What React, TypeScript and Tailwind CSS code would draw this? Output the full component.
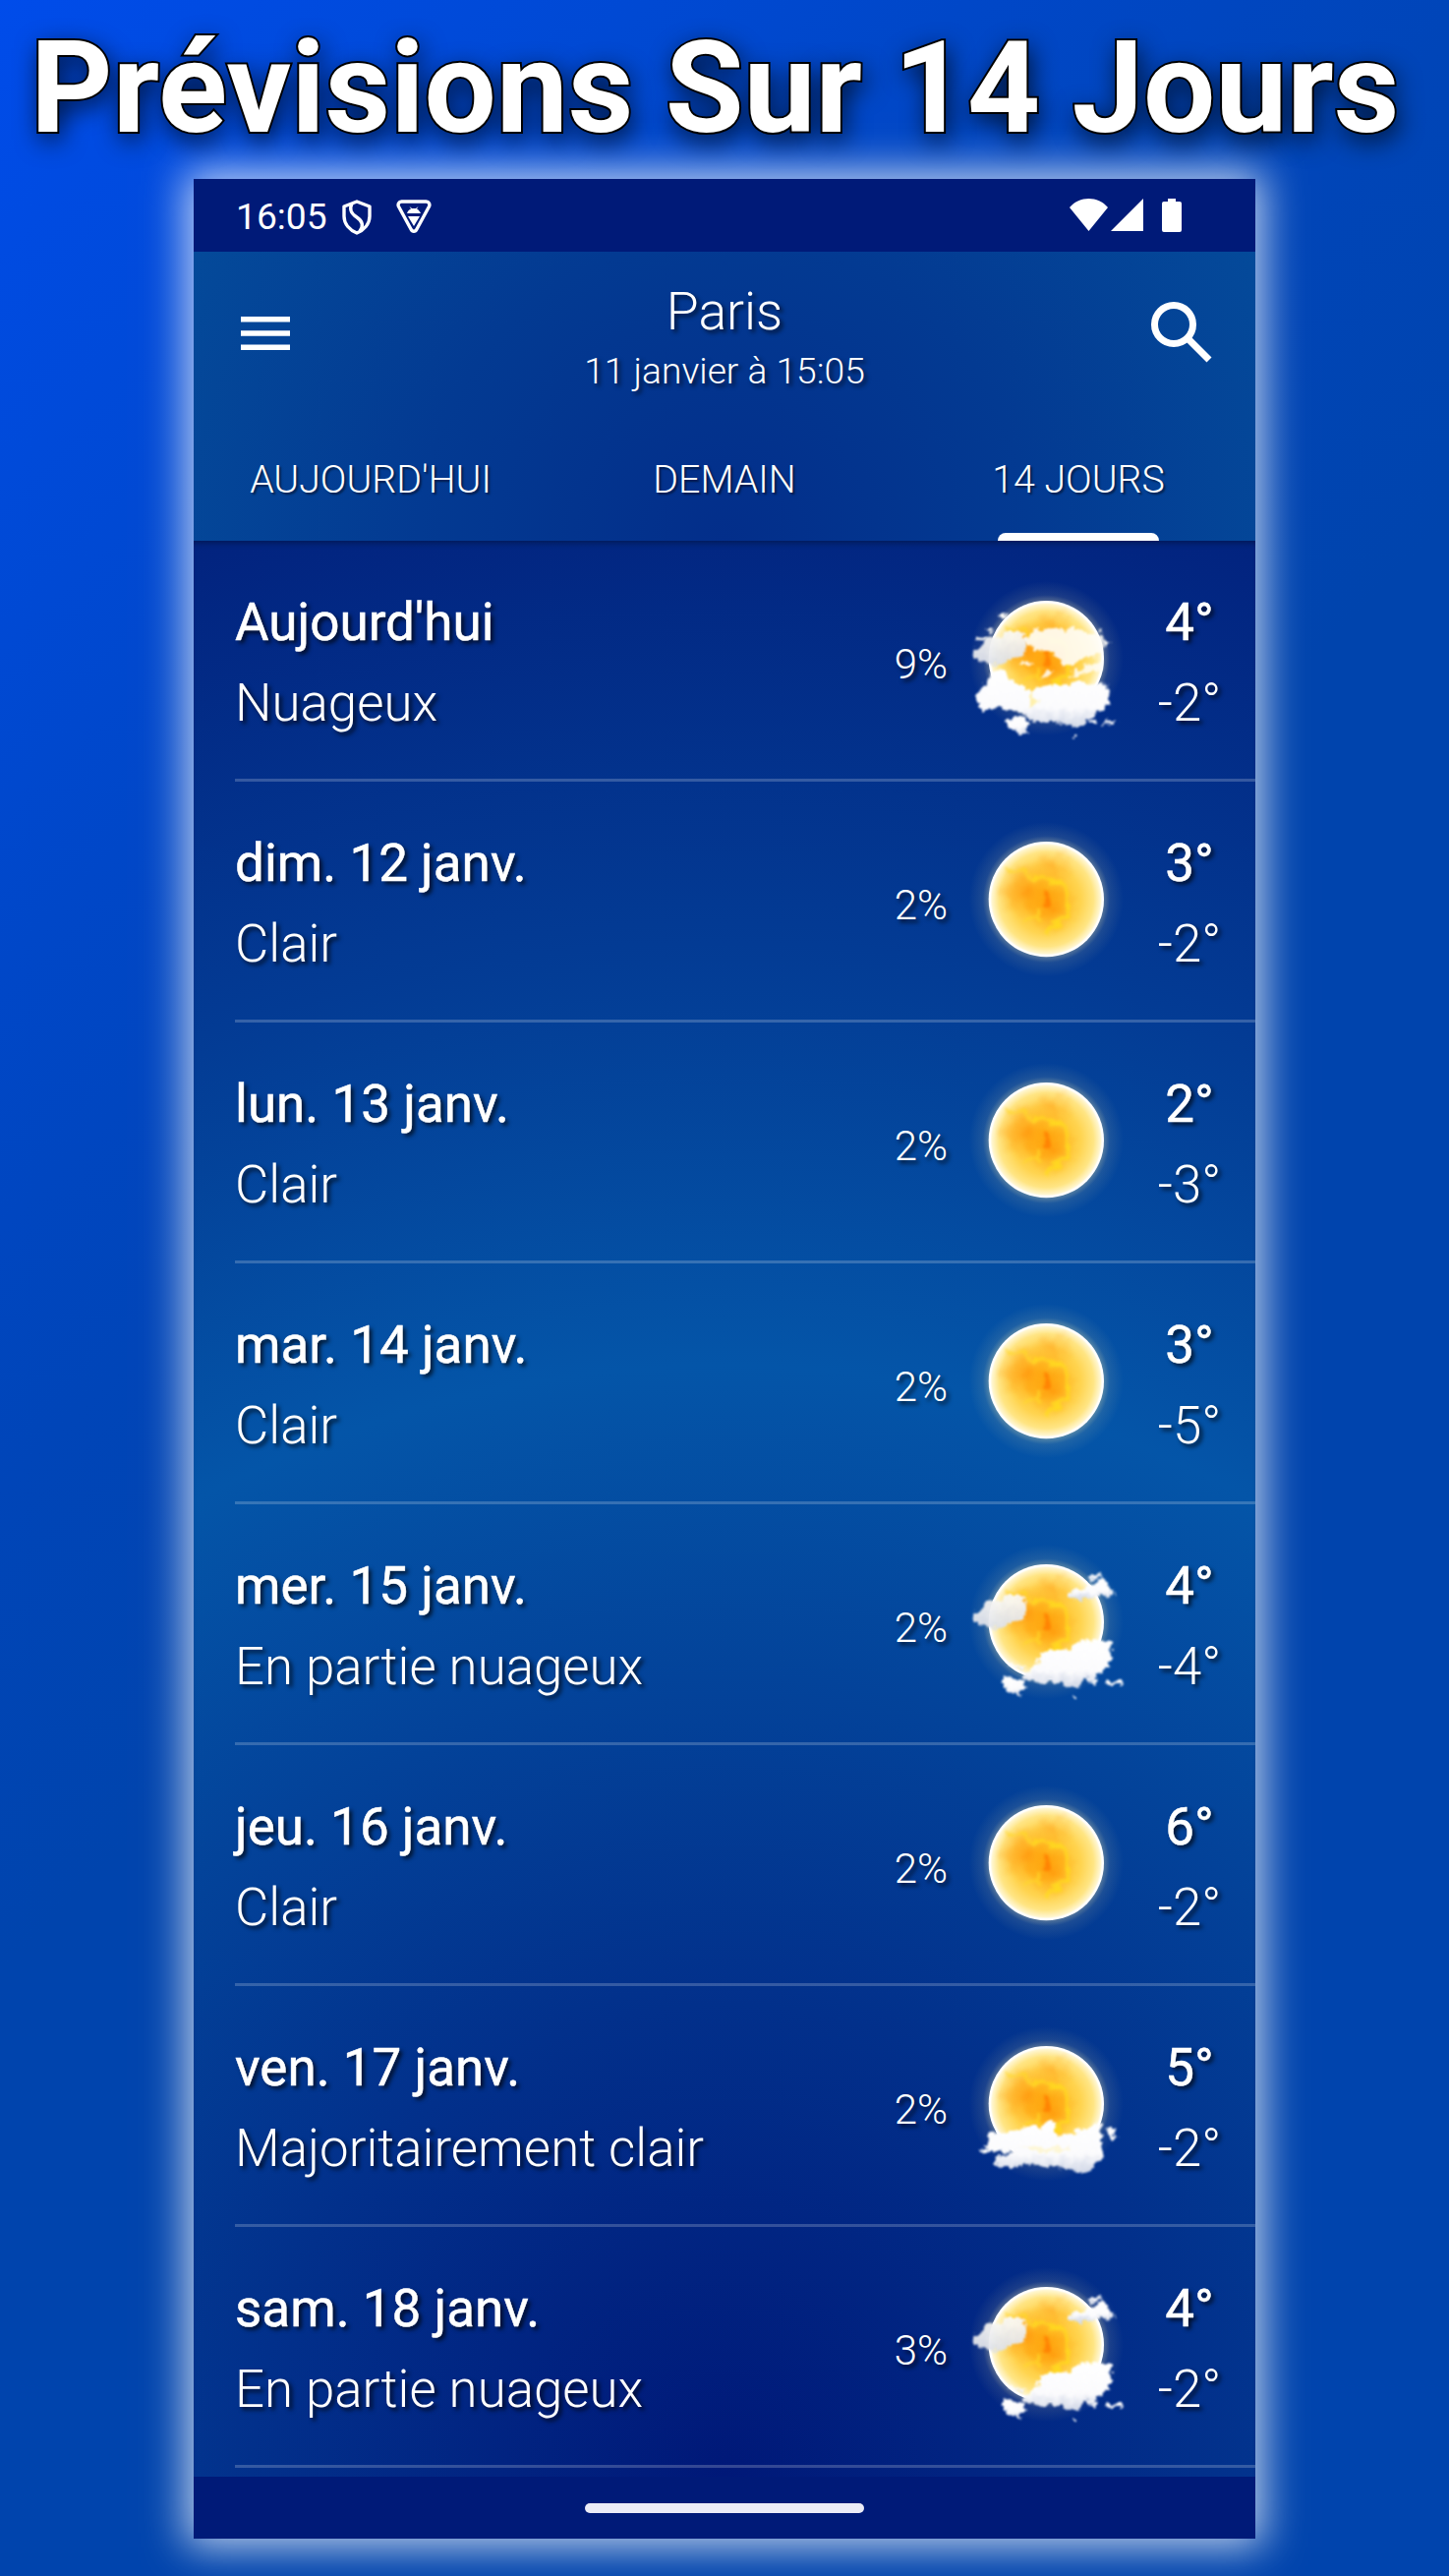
import type { ReactNode } from 'react'

type Sky = 'clear' | 'partly' | 'mostlyClear' | 'cloudy'

interface Day {
  label: string
  text: string
  rain: number
  sky: Sky
  high: number
  low: number
}

const days: Day[] = [
  { label: "Aujourd'hui", text: 'Nuageux', rain: 9, sky: 'cloudy', high: 4, low: -2 },
  { label: 'dim. 12 janv.', text: 'Clair', rain: 2, sky: 'clear', high: 3, low: -2 },
  { label: 'lun. 13 janv.', text: 'Clair', rain: 2, sky: 'clear', high: 2, low: -3 },
  { label: 'mar. 14 janv.', text: 'Clair', rain: 2, sky: 'clear', high: 3, low: -5 },
  { label: 'mer. 15 janv.', text: 'En partie nuageux', rain: 2, sky: 'partly', high: 4, low: -4 },
  { label: 'jeu. 16 janv.', text: 'Clair', rain: 2, sky: 'clear', high: 6, low: -2 },
  { label: 'ven. 17 janv.', text: 'Majoritairement clair', rain: 2, sky: 'mostlyClear', high: 5, low: -2 },
  { label: 'sam. 18 janv.', text: 'En partie nuageux', rain: 3, sky: 'partly', high: 4, low: -2 },
]

const tabs = ["Aujourd'hui", 'Demain', '14 jours']

// Gradients and filters shared by every weather icon
function IconDefs() {
  return (
    <svg className="absolute h-0 w-0" aria-hidden="true">
      <defs>
        <radialGradient id="glow">
          <stop offset="0.72" stopColor="#fff3b0" stopOpacity="0.38" />
          <stop offset="0.82" stopColor="#ffe9a0" stopOpacity="0.1" />
          <stop offset="1" stopColor="#ffe9a0" stopOpacity="0" />
        </radialGradient>
        <radialGradient id="sun">
          <stop offset="0" stopColor="#ffb818" />
          <stop offset="0.3" stopColor="#ffc32c" />
          <stop offset="0.6" stopColor="#ffd450" />
          <stop offset="0.82" stopColor="#ffe584" />
          <stop offset="0.94" stopColor="#fff6d0" />
          <stop offset="0.97" stopColor="#ffffff" />
          <stop offset="1" stopColor="#ffffff" />
        </radialGradient>
        <radialGradient id="ember">
          <stop offset="0" stopColor="#ff8600" stopOpacity="0.62" />
          <stop offset="1" stopColor="#ff9600" stopOpacity="0" />
        </radialGradient>
        <linearGradient id="cloud" x1="0" y1="0" x2="0" y2="1">
          <stop offset="0" stopColor="#ffffff" />
          <stop offset="0.65" stopColor="#fbfbfd" />
          <stop offset="1" stopColor="#cfd6e6" />
        </linearGradient>
        <linearGradient id="haze" x1="0" y1="0" x2="0" y2="1">
          <stop offset="0" stopColor="#fcfaf5" />
          <stop offset="1" stopColor="#dcdfe8" />
        </linearGradient>
        <filter id="plasma" x="-10%" y="-10%" width="120%" height="120%" colorInterpolationFilters="sRGB">
          <feTurbulence type="fractalNoise" baseFrequency="0.022" numOctaves="3" seed="4" />
          <feDisplacementMap in="SourceGraphic" scale="60" xChannelSelector="R" yChannelSelector="G" />
          <feGaussianBlur stdDeviation="4" />
        </filter>
        <filter id="fluff" x="-20%" y="-30%" width="140%" height="160%" colorInterpolationFilters="sRGB">
          <feTurbulence type="fractalNoise" baseFrequency="0.045" numOctaves="4" seed="9" />
          <feDisplacementMap in="SourceGraphic" scale="34" xChannelSelector="R" yChannelSelector="G" />
          <feGaussianBlur stdDeviation="2.4" />
        </filter>
      </defs>
    </svg>
  )
}

function Sun() {
  return (
    <>
      <circle cx="313" cy="269" r="236" fill="url(#glow)" />
      <circle cx="313" cy="269" r="176" fill="url(#sun)" />
      <g filter="url(#plasma)">
        <ellipse cx="248" cy="240" rx="85" ry="90" fill="url(#ember)" />
        <ellipse cx="330" cy="290" rx="80" ry="85" fill="url(#ember)" />
        <ellipse cx="335" cy="170" rx="60" ry="50" fill="url(#ember)" opacity="0.6" />
        <ellipse cx="315" cy="266" rx="16" ry="13" fill="#ff7c00" opacity="0.8" />
        <path
          d="M285 195 C325 225 350 210 380 225 C365 270 400 285 375 320 C350 350 320 350 300 375"
          stroke="#ffda1e"
          strokeWidth="14"
          fill="none"
          opacity="0.85"
        />
        <path
          d="M200 170 C240 200 270 180 295 215 M230 340 C260 325 290 345 300 310 M300 290 V340"
          stroke="#ffd82a"
          strokeWidth="12"
          fill="none"
          opacity="0.7"
        />
      </g>
    </>
  )
}

function LeftCloud() {
  return (
    <g filter="url(#fluff)">
      <path
        d="M86 258 C100 235 120 225 134 210 C150 200 170 208 184 198 C205 182 230 185 240 198 C262 205 266 228 254 242 C242 262 215 266 198 274 C180 294 150 292 136 280 C118 290 100 268 86 258Z"
        fill="url(#haze)"
        opacity="0.95"
      />
    </g>
  )
}

function LowerCloud() {
  return (
    <g filter="url(#fluff)" fill="url(#cloud)">
      <path d="M232 436 C258 432 268 410 286 400 C284 372 318 346 346 358 C362 348 384 360 398 344 C410 326 436 314 450 328 C470 334 494 312 516 330 C520 344 500 354 514 372 C520 392 500 412 482 420 C470 444 440 448 424 456 C400 478 370 474 360 458 C330 446 300 460 276 448 C258 452 240 448 232 436Z" />
      <path d="M178 452 C186 436 206 430 216 442 C232 448 246 446 256 456 C248 470 236 472 238 486 C222 494 196 484 182 472Z" />
      <path d="M444 452 C456 440 470 444 478 450 C466 464 452 464 444 452Z" />
      <path d="M490 462 C504 448 524 440 546 450 C534 464 510 464 490 462Z" />
      <circle cx="396" cy="500" r="6" />
    </g>
  )
}

function Clouds({ sky }: { sky: Sky }) {
  if (sky === 'partly') {
    return (
      <>
        <LeftCloud />
        <g filter="url(#fluff)" fill="url(#cloud)">
          <path d="M380 190 C392 168 414 172 432 162 C446 146 468 152 476 138 C492 132 500 150 506 166 C514 176 520 190 508 192 C488 190 472 180 460 190 C440 204 404 204 380 190Z" />
          <path d="M436 132 C452 124 470 128 484 126 L480 134 C464 138 450 138 436 132Z" />
          <path d="M192 396 C210 402 228 400 244 410 L230 416 C214 414 200 408 192 396Z" />
        </g>
        <LowerCloud />
      </>
    )
  }
  if (sky === 'mostlyClear') {
    return (
      <g filter="url(#fluff)" fill="url(#cloud)">
        <path d="M138 356 C152 346 166 366 188 362 C204 340 236 348 250 340 C266 326 284 348 298 338 C306 318 334 312 346 330 C348 346 332 350 344 366 C366 374 382 360 402 356 C426 350 448 344 462 334 C478 326 492 334 484 348 C470 372 482 388 478 402 C490 424 484 446 462 450 C450 478 420 486 398 476 C370 472 352 464 340 456 C320 470 300 450 276 454 C250 462 216 460 198 464 C176 470 150 456 158 436 C170 424 196 428 208 418 C180 412 150 420 132 408 C128 390 148 382 138 356Z" />
        <path d="M240 404 C270 392 300 410 330 400 C352 396 372 404 392 396 C370 420 280 424 240 404Z" fill="#fff3bd" opacity="0.6" />
        <path d="M106 412 C116 404 130 402 140 408 L130 418Z" />
        <path d="M502 346 C514 336 520 350 518 358 C532 366 530 388 514 388 C506 376 506 362 502 346Z" />
      </g>
    )
  }
  if (sky === 'cloudy') {
    return (
      <>
        <g filter="url(#fluff)" fill="#fffdf8">
          <path
            d="M244 212 C254 192 270 198 278 180 C294 172 312 184 330 178 C346 168 360 184 374 182 C392 172 412 180 426 190 C444 196 462 186 484 204 L486 252 C470 270 440 258 424 272 C410 290 378 296 362 282 C344 262 316 244 288 244 C268 236 254 230 244 212Z"
            opacity="0.9"
          />
          <path d="M232 284 C244 266 262 266 272 288Z M290 324 C304 310 322 304 338 308 L318 326Z M380 320 C410 306 440 284 484 276 L470 306 C440 314 410 326 380 320Z" opacity="0.85" />
          <path d="M164 138 C172 122 184 134 200 130 C194 148 180 152 164 138Z M120 182 L148 176 L144 188Z M98 212 C112 204 126 206 140 214 L124 220Z M472 184 L488 180 L484 192Z M488 220 L512 216 L492 236Z" />
        </g>
        <LeftCloud />
        <g filter="url(#fluff)" fill="url(#cloud)">
          <path d="M98 388 C92 368 116 358 132 346 C134 318 160 294 182 304 C194 318 186 334 208 340 C230 344 258 354 264 374 C290 352 314 344 334 352 C360 342 384 354 402 346 C430 340 452 356 478 346 L504 354 C512 366 494 376 506 396 C504 424 480 434 458 440 C440 462 420 480 390 482 C366 474 348 456 326 462 C300 470 280 462 262 452 C244 434 214 430 196 426 C174 414 150 424 130 430 C112 426 104 408 98 388Z" />
          <path d="M260 380 C270 366 284 384 288 398 C290 412 276 422 264 416 C256 404 266 394 260 380Z" fill="#ffee9a" opacity="0.8" />
          <path d="M186 466 C196 446 218 440 238 446 C256 450 268 462 258 474 C246 480 256 494 236 496 C214 492 198 482 186 466Z" />
          <path d="M442 462 L472 454 L466 470Z M484 470 C498 456 518 452 532 462 C520 470 502 476 484 470Z" />
          <circle cx="398" cy="506" r="6" />
        </g>
      </>
    )
  }
  return null
}

function WeatherIcon({ sky }: { sky: Sky }) {
  return (
    <svg viewBox="30 0 540 540" className="mt-[30px] h-[180px] w-[180px] shrink-0">
      <Sun />
      <Clouds sky={sky} />
    </svg>
  )
}

function StatusBar() {
  return (
    <div className="flex h-[74px] items-center bg-[#001a78] pr-[75px] pl-[43px]">
      <span className="pt-px text-[37.2px] leading-[74px]">16:05</span>
      <svg viewBox="0 0 30 36" className="mt-[3px] ml-[15px] h-[36px] w-[30px]" fill="none" stroke="#fff" strokeWidth="3.4">
        <path d="M15 2 L28 7 V17 C28 25 22 31 15 34 C8 31 2 25 2 17 V7 Z" strokeLinejoin="round" />
        <path d="M10 4 C7 10 9 14 15 18 C21 22 22 27 18 32" />
      </svg>
      <svg viewBox="0 0 36 34" className="mt-[2px] ml-[25px] h-[34px] w-[36px]" fill="none">
        <path d="M5.500 2 H30.500 C33.500 2 34.500 5 33.500 7 L21 30 C19.500 33 16.500 33 15 30 L2.500 7 C1.500 5 2.500 2 5.500 2Z" stroke="#fff" strokeWidth="3.4" />
        <path d="M11 14 C12 11 14 10 15 9.500 L13.500 7 L16 9 H20 L22.500 7 L21 9.500 C23 10.500 24 12 25 14Z" fill="#fff" />
        <path d="M12 17 H24 L18 27Z" fill="#fff" />
      </svg>
      <svg viewBox="0 0 114 34" className="ml-auto h-[34px] w-[114px]" fill="#fff">
        <path d="M0 9 C10 -3 29 -3 39 9 L19.500 33Z" />
        <path d="M75 0 V33 H42Z" />
        <path d="M100 0 H108 V3 H112 Q114 3 114 5 V32 Q114 34 112 34 H96 Q94 34 94 32 V5 Q94 3 96 3 H100Z" />
      </svg>
    </div>
  )
}

function Header() {
  return (
    <header className="h-[294px] bg-[radial-gradient(circle_at_50%_100%,#032e8a_0px,#033a92_310px,#044a9a_620px)]">
      <div className="flex h-[168px] justify-between pr-[44px] pl-[48px]">
        <div className="w-[58px] pt-[66px]">
          <svg viewBox="0 0 50 34" className="h-[34px] w-[50px]" fill="#fff">
            <path d="M0 0H50V5.600H0Z M0 14.200H50V19.800H0Z M0 28.400H50V34H0Z" />
          </svg>
        </div>
        <div className="pt-[27px] text-center font-light [text-shadow:3px_3px_4px_rgba(0,0,0,0.65)]">
          <h2 className="text-[53.5px] leading-[68px]">Paris</h2>
          <p className="pt-px text-[37.2px] leading-[50px]">11 janvier à 15:05</p>
        </div>
        <svg viewBox="0 0 62 62" className="mt-[51px] h-[62px] w-[62px]" fill="none" stroke="#fff" strokeWidth="7">
          <circle cx="23" cy="23" r="19.500" />
          <path d="M38.500 38.500 L59 59" />
        </svg>
      </div>
      <nav className="grid h-[126px] grid-cols-3 text-[39.3px] font-light uppercase">
        {tabs.map((tab, i) => (
          <div key={tab} className="relative flex items-center justify-center pt-[3px] [text-shadow:2px_2px_2px_rgba(0,0,0,0.5)]">
            {tab}
            {i === 2 && <div className="absolute bottom-0 h-[8px] w-[164px] rounded-t-[8px] bg-white" />}
          </div>
        ))}
      </nav>
    </header>
  )
}

function Line({ children, light }: { children: ReactNode; light?: boolean }) {
  return (
    <p
      className={
        light
          ? 'text-[52.8px] leading-[82px] font-light'
          : 'text-[53px] leading-[82px] font-normal [-webkit-text-stroke:0.5px_#fff]'
      }
    >
      {children}
    </p>
  )
}

function DayRow({ day }: { day: Day }) {
  return (
    <li className="ml-[42px] flex h-[245px] border-b-[3px] border-white/20 [text-shadow:3px_3px_4px_rgba(0,0,0,0.75)]">
      <div className="flex-1 pt-[42px] whitespace-nowrap">
        <Line>{day.label}</Line>
        <Line light>{day.text}</Line>
      </div>
      <span className="mr-[6px] pt-[85px] text-[42px] leading-[82px] font-light">{day.rain}%</span>
      <WeatherIcon sky={day.sky} />
      <div className="mr-[8px] w-[119px] pt-[42px] pl-px text-center">
        <Line>{day.high}°</Line>
        <Line light>{day.low}°</Line>
      </div>
    </li>
  )
}

export default function App() {
  return (
    <div className="h-[2620px] w-[1474px] overflow-hidden bg-[linear-gradient(135deg,#004cea_0%,#004ad9_12%,#0047c8_24%,#0045b8_37%,#0044ad_49%,#0044ad_100%)] font-[Roboto,sans-serif] text-white">
      <IconDefs />
      <h1 className="relative z-10 h-[182px] pl-[31px] text-[129.9px] leading-[180px] font-bold whitespace-nowrap [-webkit-text-stroke:4px_#000] [paint-order:stroke_fill] [text-shadow:3px_8px_26px_rgba(0,0,0,0.8)]">
        Prévisions Sur 14 Jours
      </h1>
      <main className="ml-[197px] flex h-[2400px] w-[1080px] flex-col shadow-[0_0_40px_8px_rgba(255,255,255,0.75)]">
        <StatusBar />
        <Header />
        <ul className="h-[1969px] bg-[radial-gradient(circle_at_50%_100%,#001878_0px,#02308b_480px,#0455a8_1130px,#033b94_1560px,#02237f_2041px)] shadow-[inset_0_6px_6px_-4px_rgba(0,0,0,0.35)]">
          {days.map((day) => (
            <DayRow key={day.label} day={day} />
          ))}
        </ul>
        <div className="flex h-[63px] items-center justify-center bg-[#001a78]">
          <div className="h-[10px] w-[284px] rounded-full bg-[#ebebf7]" />
        </div>
      </main>
    </div>
  )
}
